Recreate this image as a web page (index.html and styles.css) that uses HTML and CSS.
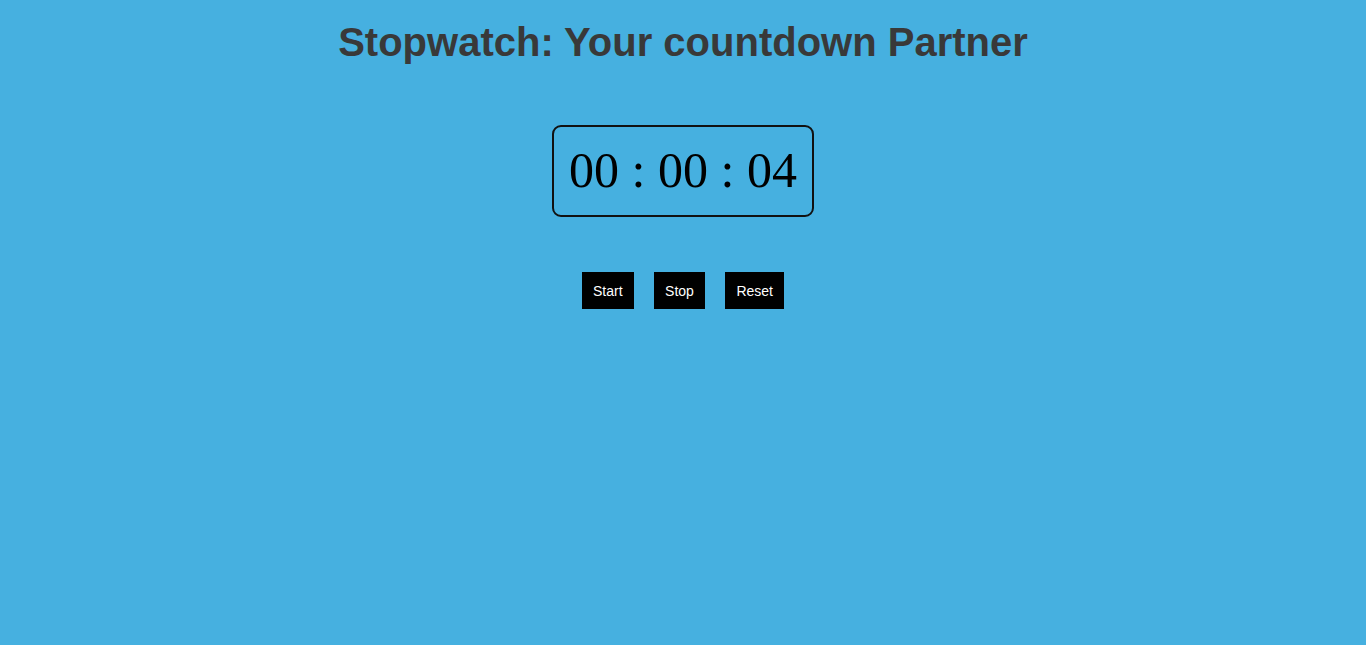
FILE: index.html
```html
<!DOCTYPE html>
<html lang="en">
<head>
<meta charset="utf-8">
<title>Stopwatch</title>
<link rel="stylesheet" href="styles.css">
</head>
<body>
<main class="app">
  <h1 class="title">Stopwatch: Your countdown Partner</h1>
  <div class="timer">00 : 00 : 04</div>
  <div class="controls">
    <button class="btn">Start</button>
    <button class="btn">Stop</button>
    <button class="btn">Reset</button>
  </div>
</main>
</body>
</html>
```
FILE: styles.css
```css
html, body {
  margin: 0;
  padding: 0;
  background: #46b0e0;
  height: 100%;
}
.app {
  display: flex;
  flex-direction: column;
  align-items: center;
  padding-top: 19px;
}
.title {
  margin: 0;
  font-family: "Liberation Sans", Arial, sans-serif;
  font-weight: bold;
  font-size: 40px;
  color: #393939;
  line-height: 46px;
}
.timer {
  margin-top: 60px;
  border: 2px solid #111;
  border-radius: 9px;
  padding: 15px 15px 16px;
  font-family: "Liberation Serif", "Times New Roman", serif;
  font-size: 50px;
  line-height: 57px;
  color: #000;
}
.controls {
  margin-top: 55px;
  display: flex;
  gap: 20px;
}
.btn {
  background: #000;
  color: #fff;
  border: none;
  padding: 11px 11.25px 9px;
  font-family: "Liberation Sans", Arial, sans-serif;
  font-size: 14px;
  line-height: 17px;
  cursor: pointer;
}
```
